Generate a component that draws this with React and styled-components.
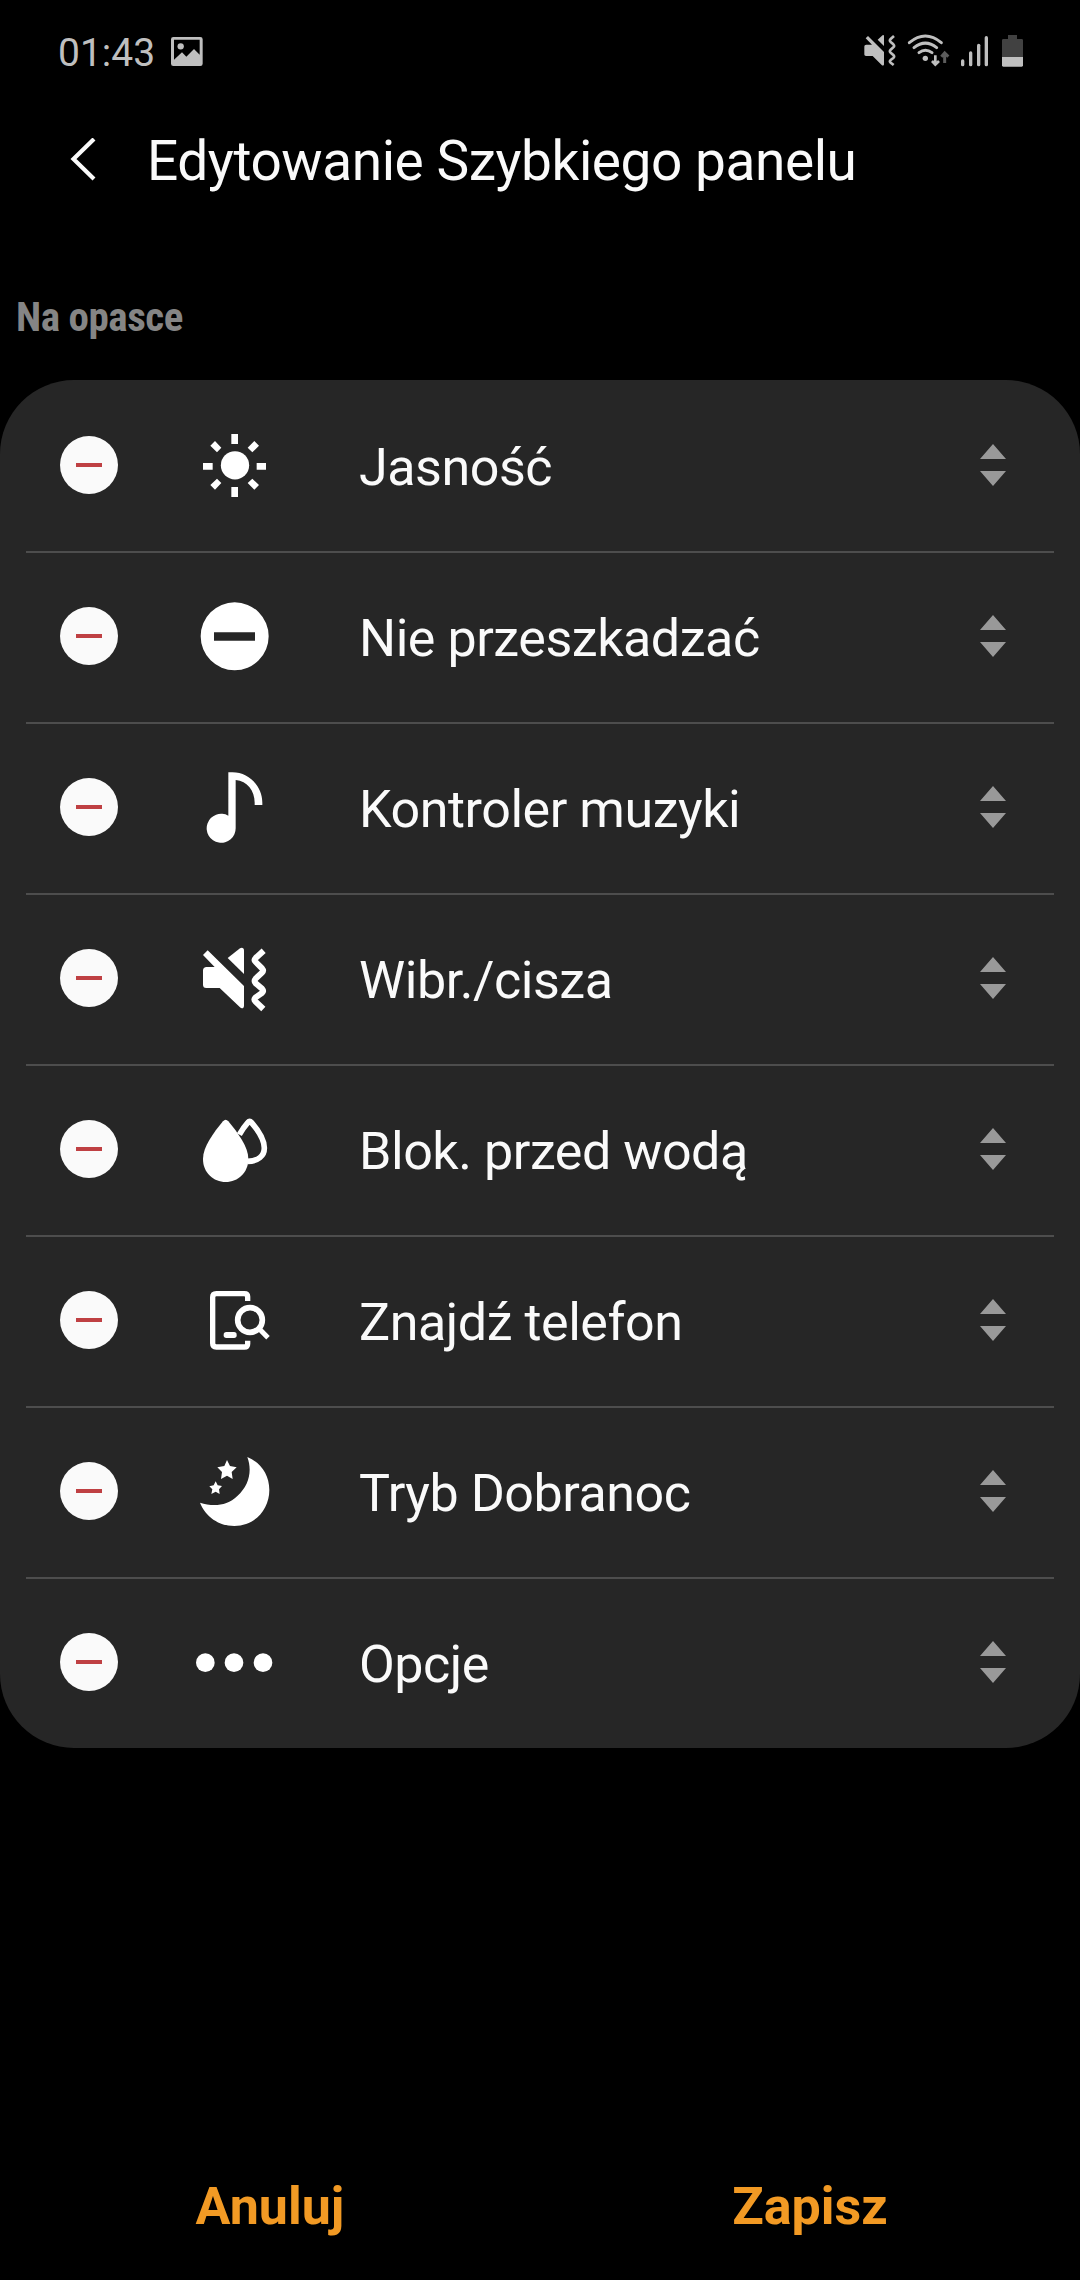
import React from "react";
import styled, { createGlobalStyle } from "styled-components";

const items = [
  { name: "Jasność", icon: <BrightnessIcon /> },
  { name: "Nie przeszkadzać", icon: <DisturbIcon /> },
  { name: "Kontroler muzyki", icon: <MusicIcon /> },
  { name: "Wibr./cisza", icon: <MuteIcon /> },
  { name: "Blok. przed wodą", icon: <WaterIcon /> },
  { name: "Znajdź telefon", icon: <FindPhoneIcon /> },
  { name: "Tryb Dobranoc", icon: <NightIcon /> },
  { name: "Opcje", icon: <MoreIcon /> },
];

function BrightnessIcon() {
  return (
    <ItemIcon viewBox="0 0 330 330">
      <circle cx="165" cy="166" r="42.5" />
      <path d="M154 72h20v30h-20zM154 231h20v30h-20zM69 159h29v20H69zM230 159h28v20h-28z" />
      <path d="M105 93l19 20-13 14-20-20zM223 93l14 14-20 20-14-14zM111 206l13 13-19 20-14-14zM217 206l20 19-14 14-20-20z" />
    </ItemIcon>
  );
}

function DisturbIcon() {
  return (
    <ItemIcon viewBox="0 3 330 330">
      <path
        fillRule="evenodd"
        d="M164 67a102 102 0 1 0 0 204a102 102 0 1 0 0-204zM102 157h123v25H102z"
      />
    </ItemIcon>
  );
}

function MusicIcon() {
  return (
    <ItemIcon viewBox="0 6 330 330">
      <path d="M145 67h12c50 0 90 42 90 91v7h-23v-7c0-36-22-65-57-68v144a43.500 43.500 0 1 1-22-37z" />
    </ItemIcon>
  );
}

function MuteIcon() {
  return (
    <ItemIcon viewBox="0 -6 330 330">
      <path d="M83 76L192 183v59c0 8-7 10-12 5l-61-58H79c-7 0-10-4-10-10v-42c0-7 4-11 11-11h24L69 90z" />
      <path d="M143 99l37-29c6-4 12-1 12 6v71z" />
      <path
        d="M251 77l-24 22q-6 6 0 12l19 19q6 7 0 13l-19 18q-6 7 0 14l19 16q6 7 0 13l-20 14q-5 6 0 11l24 23"
        fill="none"
        stroke="#fff"
        strokeWidth="18"
      />
    </ItemIcon>
  );
}

function WaterIcon() {
  return (
    <ItemIcon viewBox="0 -3 330 330">
      <path d="M129 79q8-9 16 0c29 35 60 77 60 113 0 41-31 69-68 69s-68-28-68-69c0-36 31-78 60-113z" />
      <path
        d="M178 119c9-16 18-28 26-37q5-6 10 0c20 23 39 52 39 77 0 24-19 40-50 40"
        fill="none"
        stroke="#fff"
        strokeWidth="17"
      />
    </ItemIcon>
  );
}

function FindPhoneIcon() {
  return (
    <ItemIcon viewBox="0 0 330 330">
      <g fill="none" stroke="#fff" strokeWidth="16">
        <path d="M203 108V95q0-9-10-9h-84q-11 0-11 11v138q0 11 11 11h84q10 0 10-10v-9" />
        <circle cx="210" cy="165" r="37" strokeWidth="17" />
        <path d="M236 190l28 28" strokeWidth="15" />
      </g>
      <rect x="131" y="201" width="39" height="18" rx="8" />
    </ItemIcon>
  );
}

function NightIcon() {
  return (
    <ItemIcon viewBox="0 3 330 330">
      <path d="M202 66c39 16 66 52 66 99 0 60-45 108-105 108-46 0-87-28-103-70 38 12 80 11 112-20 36-33 45-76 30-117z" />
      <path d="M141 75l9 18 20 4-15 14 3 21-17-10-18 10 3-21-14-14 21-4z" />
      <path d="M107 139l6 12 13 2-9 10 2 14-12-7-13 7 3-14-9-9 13-3z" />
    </ItemIcon>
  );
}

function MoreIcon() {
  return (
    <ItemIcon viewBox="0 0 330 330">
      <circle cx="76" cy="167" r="28" />
      <circle cx="162" cy="167" r="28" />
      <circle cx="249" cy="167" r="28" />
    </ItemIcon>
  );
}

function StatusIcons() {
  return (
    <StatusSvg width="170" viewBox="60 0 510 180">
      <path d="M84 48l48 48v37c0 4-4 5-7 2l-27-27H78c-3 0-5-2-5-5V80c0-4 2-6 6-6h17L77 55z" />
      <path d="M113 59l13-12c3-3 6-2 6 2v29z" />
      <g fill="none" stroke="#bfbfbf">
        <path
          d="M162 48l-10 9q-5 5 0 9l8 7q5 5 0 9l-8 7q-5 5 0 9l8 7q5 5 0 9l-8 6q-5 4 0 8l9 7"
          strokeWidth="8"
        />
        <path
          d="M208 68q48-40 96 0M222 83q34-27 68 0M237 98q19-15 39 0"
          strokeWidth="9"
          strokeLinecap="round"
        />
        <path d="M286 106v27M276 123l10 11 11-11" strokeWidth="8" />
        <path d="M314 129v-28M304 110l10-11 11 11" strokeWidth="9" stroke="#5c5c5c" />
      </g>
      <circle cx="256" cy="115" r="8" />
      <rect x="363" y="118" width="10" height="21" rx="5" />
      <rect x="387" y="94" width="10" height="45" rx="5" />
      <rect x="411" y="71" width="10" height="68" rx="5" />
      <rect x="434" y="48" width="10" height="91" rx="5" />
      <path d="M504 45h27v12h14q4 0 4 4v50h-63V61q0-4 4-4h14z" fill="#414141" />
      <path d="M486 111h63v25q0 4-4 4h-55q-4 0-4-4z" />
    </StatusSvg>
  );
}

function App() {
  return (
    <Wrapper>
      <GlobalStyle />
      <StatusBar>
        <Time>01:43</Time>
        <StatusSvg width="32" viewBox="514 0 96 180">
          <path
            fillRule="evenodd"
            d="M521 51h81q7 0 7 7v73q0 7-7 7h-81q-7 0-7-7V58q0-7 7-7zM523 59v60l24-22 13 13 23-23 17 17V59z"
          />
          <circle cx="543" cy="79" r="9.500" />
        </StatusSvg>
        <Spacer />
        <StatusIcons />
      </StatusBar>
      <Header>
        <BackButton aria-label="Wstecz">
          <svg width="26" height="44" viewBox="0 0 26 44">
            <path d="M24 1L3.500 21 24 41" fill="none" stroke="#fafafa" strokeWidth="4.200" />
          </svg>
        </BackButton>
        <Title>Edytowanie Szybkiego panelu</Title>
      </Header>
      <SectionLabel>Na opasce</SectionLabel>
      <List>
        {items.map((item) => (
          <Row key={item.name}>
            <RemoveButton aria-label="Usuń">
              <Minus />
            </RemoveButton>
            {item.icon}
            <Name>{item.name}</Name>
            <DragHandle width="26" height="42" viewBox="0 0 26 42">
              <path d="M13 0l13 15H0zM0 27h26L13 42z" />
            </DragHandle>
          </Row>
        ))}
      </List>
      <Footer>
        <FooterButton>Anuluj</FooterButton>
        <FooterButton>Zapisz</FooterButton>
      </Footer>
    </Wrapper>
  );
}

export default App;

const GlobalStyle = createGlobalStyle`
  * {
    box-sizing: border-box;
  }

  body {
    margin: 0;
    background-color: #000000;
    font-family: Roboto, sans-serif;
  }
`;

const Wrapper = styled.div`
  display: flex;
  flex-direction: column;
  width: 1080px;
  height: 2280px;
  background-color: #000000;
  color: #fafafa;
`;

const StatusBar = styled.div`
  display: flex;
  align-items: center;
  height: 100px;
  padding-left: 58px;
  padding-right: 50px;
`;

const Time = styled.div`
  width: 113px;
  padding-top: 5px;
  font-size: 39px;
  line-height: 46px;
  color: #bfbfbf;
`;

const StatusSvg = styled.svg`
  height: 60px;
  fill: #bfbfbf;
`;

const Spacer = styled.div`
  flex: 1;
`;

const Header = styled.div`
  display: flex;
  align-items: center;
  height: 120px;
  padding-left: 70px;
`;

const BackButton = styled.button`
  display: flex;
  width: 77px;
  padding: 0;
  border: none;
  background: none;
`;

const Title = styled.h1`
  margin: 0;
  padding-top: 2px;
  font-size: 55px;
  font-weight: 400;
  line-height: 64px;
  letter-spacing: -0.45px;
  white-space: nowrap;
`;

const SectionLabel = styled.div`
  height: 160px;
  padding-top: 73px;
  padding-left: 16px;
  font-family: "Roboto Condensed", Roboto, sans-serif;
  font-size: 41px;
  font-weight: 700;
  font-stretch: 75%;
  line-height: 48px;
  letter-spacing: -0.45px;
  color: #858585;
`;

const List = styled.div`
  padding: 0 26px;
  border-radius: 74px;
  background-color: #262626;
`;

const Row = styled.div`
  display: flex;
  align-items: center;
  height: 171px;
  padding: 0 48px 3px 34px;
  border-top: 2px solid #4d4d4d;

  &:first-child {
    border-top-color: transparent;
  }
`;

const RemoveButton = styled.button`
  display: flex;
  justify-content: center;
  align-items: center;
  width: 58px;
  height: 58px;
  padding: 0;
  border: none;
  border-radius: 50%;
  background-color: #fafafa;
`;

const Minus = styled.span`
  width: 26px;
  height: 4px;
  background-color: #bf4043;
`;

const ItemIcon = styled.svg`
  width: 110px;
  height: 110px;
  margin-left: 62px;
  fill: #ffffff;
`;

const Name = styled.div`
  flex: 1;
  margin-left: 69px;
  padding-top: 6px;
  font-size: 52px;
  line-height: 62px;
  letter-spacing: -0.45px;
`;

const DragHandle = styled.svg`
  fill: #999999;
`;

const Footer = styled.div`
  display: flex;
  margin-top: auto;
  padding-bottom: 42px;
`;

const FooterButton = styled.button`
  flex: 1;
  padding: 0;
  border: none;
  background: none;
  font-family: inherit;
  font-size: 52px;
  font-weight: 700;
  line-height: 62px;
  color: #f29a24;
`;
